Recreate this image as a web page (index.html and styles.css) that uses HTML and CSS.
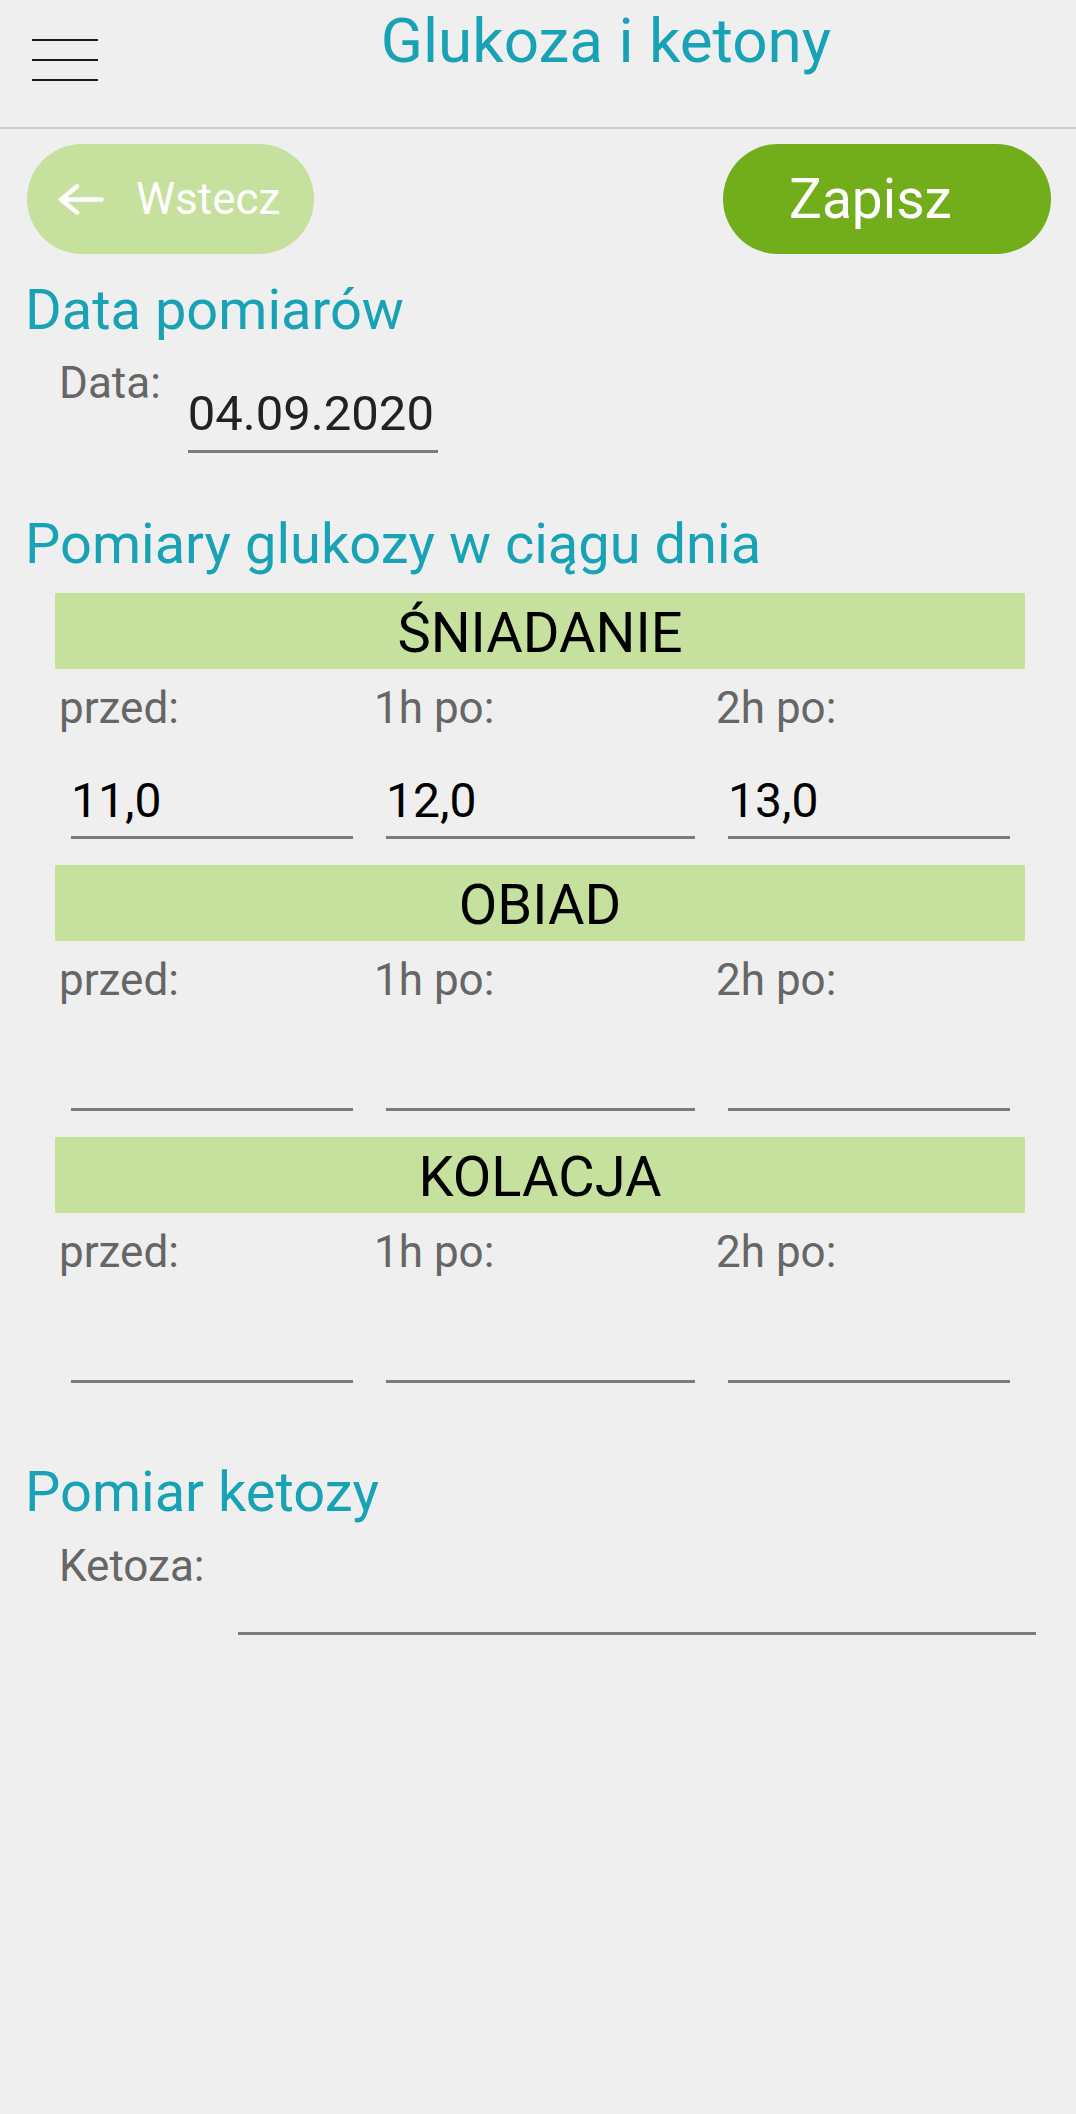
FILE: index.html
```html
<!DOCTYPE html>
<html lang="pl">
<head>
    <meta charset="UTF-8">
    <meta name="viewport" content="width=device-width, initial-scale=1.0">
    <title>Glukoza i ketony</title>
    <link rel="stylesheet" href="styles.css">
</head>
<body>
    <header class="topbar">
        <button class="menu" type="button" aria-label="Menu">
            <span></span>
            <span></span>
            <span></span>
        </button>
        <h1 class="title">Glukoza i ketony</h1>
    </header>

    <div class="actions">
        <button class="btn btn-back" type="button">
            <svg class="arrow" width="46" height="31" viewBox="0 0 46 31" aria-hidden="true">
                <path d="M43.5 15.5H3 M19 2.5L3 15.5L19 28.5" fill="none" stroke="#fff" stroke-width="4.5" stroke-linecap="round" stroke-linejoin="round"/>
            </svg>
            Wstecz
        </button>
        <button class="btn btn-save" type="submit">Zapisz</button>
    </div>

    <main class="content">
        <h2 class="section-title">Data pomiarów</h2>
        <div class="field-row">
            <span class="label">Data:</span>
            <input class="date-input" type="text" value="04.09.2020">
        </div>

        <h2 class="section-title glucose-title">Pomiary glukozy w ciągu dnia</h2>
        <div class="meal-list">
            <section class="meal">
                <div class="meal-name">ŚNIADANIE</div>
                <div class="meal-grid">
                    <div class="cell"><span class="label">przed:</span><input class="value-input" type="text" value="11,0"></div>
                    <div class="cell"><span class="label">1h po:</span><input class="value-input" type="text" value="12,0"></div>
                    <div class="cell"><span class="label">2h po:</span><input class="value-input" type="text" value="13,0"></div>
                </div>
            </section>
            <section class="meal">
                <div class="meal-name">OBIAD</div>
                <div class="meal-grid">
                    <div class="cell"><span class="label">przed:</span><input class="value-input" type="text"></div>
                    <div class="cell"><span class="label">1h po:</span><input class="value-input" type="text"></div>
                    <div class="cell"><span class="label">2h po:</span><input class="value-input" type="text"></div>
                </div>
            </section>
            <section class="meal">
                <div class="meal-name">KOLACJA</div>
                <div class="meal-grid">
                    <div class="cell"><span class="label">przed:</span><input class="value-input" type="text"></div>
                    <div class="cell"><span class="label">1h po:</span><input class="value-input" type="text"></div>
                    <div class="cell"><span class="label">2h po:</span><input class="value-input" type="text"></div>
                </div>
            </section>
        </div>

        <h2 class="section-title ketone-title">Pomiar ketozy</h2>
        <div class="field-row">
            <span class="label">Ketoza:</span>
            <input class="ketone-input" type="text">
        </div>
    </main>
</body>
</html>
```

FILE: styles.css
```css
html {
    background-color: #efefef;
}

body {
    margin: 0;
    padding: 0;
    min-height: 100vh;
    font-family: Roboto, "Noto Sans", sans-serif;
    background-color: #efefef;
}

/* top bar */
.topbar {
    display: flex;
    align-items: flex-start;
    height: 129px;
    box-sizing: border-box;
    padding-top: 10px;
    border-bottom: 2px solid #c9c9c9;
}

.menu {
    display: flex;
    flex-direction: column;
    gap: 18px;
    width: 66px;
    margin: 29px 38px 0 32px;
    padding: 0;
    border: none;
    background: none;
}

.menu span {
    display: block;
    height: 2px;
    background-color: #1a1a1a;
}

.title {
    flex: 1;
    margin: 0;
    text-align: center;
    font-size: 62px;
    line-height: 62px;
    font-weight: 400;
    color: #18a2b5;
}

/* buttons */
.actions {
    display: flex;
    justify-content: space-between;
    padding: 15px 25px 0 27px;
}

.btn {
    display: flex;
    align-items: center;
    height: 110px;
    border: none;
    border-radius: 55px;
    color: #fff;
    font-family: inherit;
    cursor: pointer;
}

.btn-back {
    width: 287px;
    padding: 0 0 0 31px;
    gap: 32px;
    font-size: 44px;
    background-color: #c6e09d;
}

.btn-save {
    width: 328px;
    padding: 0 0 0 66px;
    font-size: 55px;
    background-color: #72ad1b;
}

.arrow {
    flex-shrink: 0;
}

/* form */
.section-title {
    margin: 24px 0 0;
    padding-left: 25px;
    font-size: 56px;
    line-height: 64px;
    font-weight: 400;
    color: #18a2b5;
}

.glucose-title {
    margin-top: 59px;
}

.ketone-title {
    margin-top: 77px;
}

.field-row {
    display: flex;
    align-items: flex-start;
    margin-top: 15px;
    padding-left: 59px;
}

.ketone-title + .field-row {
    margin-top: 16px;
}

.label {
    font-size: 44px;
    line-height: 52px;
    color: #666;
}

input {
    margin: 0;
    border: none;
    border-bottom: 3px solid #7b7b7b;
    border-radius: 0;
    background: transparent;
    font-family: inherit;
    outline: none;
    box-sizing: content-box;
}

.date-input {
    width: 250px;
    height: 58px;
    margin-left: 27px;
    padding: 28px 0 7px;
    font-size: 49px;
    line-height: 58px;
    color: #222;
}

.ketone-input {
    width: 798px;
    height: 56px;
    margin-left: 33px;
    padding: 29px 0 7px;
    font-size: 48px;
    line-height: 56px;
    color: #111;
}

.meal-list {
    display: flex;
    flex-direction: column;
    gap: 26px;
    margin-top: 17px;
}

.meal-name {
    height: 76px;
    box-sizing: border-box;
    margin: 0 51px 0 55px;
    padding-top: 4px;
    text-align: center;
    font-size: 56px;
    line-height: 72px;
    color: #000;
    background-color: #c6e09d;
}

.meal-grid {
    display: grid;
    grid-template-columns: 315px 342px 315px;
    margin-top: 13px;
    padding-left: 59px;
}

.cell {
    display: flex;
    flex-direction: column;
}

.value-input {
    height: 56px;
    margin: 0 21px 0 12px;
    padding: 39px 0 7px;
    font-size: 48px;
    line-height: 56px;
    color: #000;
}
```
